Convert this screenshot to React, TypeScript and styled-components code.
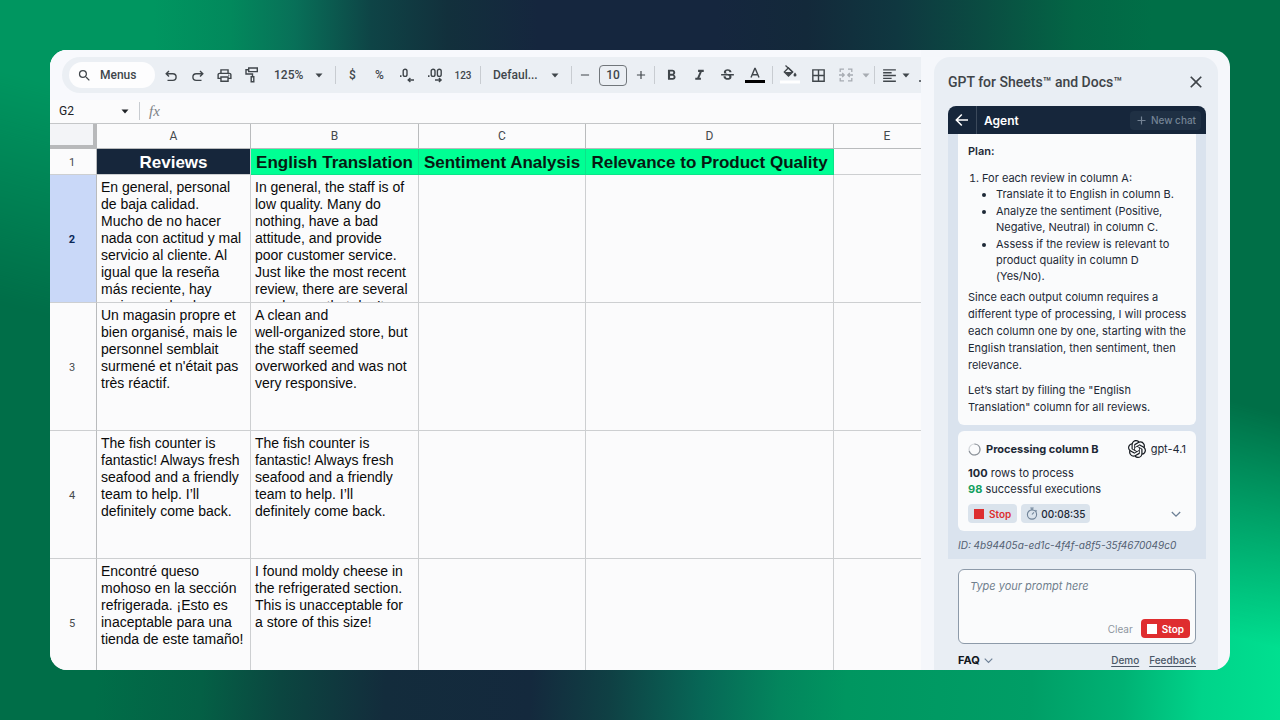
import React from "react";
import styled, { createGlobalStyle, css } from "styled-components";
import {
  MdSearch,
  MdOutlinePrint,
  MdStrikethroughS,
  MdFormatItalic,
  MdFormatBold,
  MdBorderAll,
  MdFormatAlignLeft,
  MdClose,
  MdAdd,
  MdRemove,
} from "react-icons/md";

const GlobalStyle = createGlobalStyle`
  *, *::before, *::after { box-sizing: border-box; }
  body { margin: 0; }
  button, select, input, textarea { font: inherit; color: inherit; margin: 0; }
`;

const ui = `Roboto, "Liberation Sans", sans-serif`;
const chat = `Inter, "Liberation Sans", sans-serif`;
const sheet = `"Liberation Sans", Arial, sans-serif`;

/* ---------- backdrop and window ---------- */

const Backdrop = styled.div`
  position: relative;
  display: flex;
  height: 100vh;
  padding: 50px;
  background: linear-gradient(
    93deg,
    #006e48 10%,
    #046045 18%,
    #0b4640 24%,
    #132c3c 32%,
    #14293d 43%,
    #0f4044 49%,
    #076756 56%,
    #03865d 62%,
    #009660 67%,
    #009e66 81%,
    #00b274 88%,
    #00d48a 94%,
    #00e090 100%
  );

  &::before {
    content: "";
    position: absolute;
    inset: 0;
    background: linear-gradient(
      90deg,
      #009660 12%,
      #02895c 18%,
      #087058 23%,
      #0e4446 29%,
      #12303c 35%,
      #15263e 42%,
      #15263e 56%,
      #13293a 63%,
      #0f3740 70%,
      #0a4d42 77%,
      #036645 84%,
      #006f47 90%
    );
    mask-image: linear-gradient(195deg, #000 39%, transparent 61%);
  }
`;

const Window = styled.div`
  position: relative;
  flex: 1;
  min-width: 0;
  display: flex;
  gap: 13px;
  padding-right: 12px;
  border-radius: 17px;
  overflow: hidden;
  background: #f5f7fb;
`;

const SheetPane = styled.main`
  flex: 1;
  min-width: 0;
  display: flex;
  flex-direction: column;
  overflow: hidden;
  background: #fbfbfc;
  font-family: ${ui};
`;

/* ---------- toolbar ---------- */

const ToolbarArea = styled.div`
  flex: none;
  padding: 7px 0 7px 12px;
  background: #f8f9fd;
  overflow: hidden;
`;

const Toolbar = styled.div`
  display: flex;
  align-items: center;
  width: max-content;
  height: 36px;
  padding: 0 7px;
  border-radius: 18px;
  background: #ebeff4;
  color: #40464b;
  font-size: 12px;
  font-weight: 500;
`;

const MenuSearch = styled.button`
  display: flex;
  align-items: center;
  gap: 8px;
  width: 86px;
  height: 26px;
  margin-right: 2px;
  padding: 0 8px;
  border: 0;
  border-radius: 13px;
  background: #fdfdfe;
  svg { width: 15px; height: 15px; }
`;

const Tool = styled.button<{ $w?: number; $dim?: boolean; $small?: boolean }>`
  display: flex;
  align-items: center;
  justify-content: center;
  flex: none;
  width: ${(p) => p.$w ?? 28}px;
  height: 28px;
  padding: 0;
  border: 0;
  background: none;
  font-size: ${(p) => (p.$small ? 10 : 12)}px;
  color: ${(p) => (p.$dim ? "#a7acb2" : "#40464b")};
  svg { flex: none; }
`;

const Rule = styled.span`
  flex: none;
  width: 1px;
  height: 18px;
  margin: 0 3px;
  background: #c8ccd1;
`;

const SelectBox = styled.label<{ $w: number }>`
  display: grid;
  grid-template-columns: 1fr 8px;
  align-items: center;
  flex: none;
  width: ${(p) => p.$w}px;
  padding: 0 9px;
  select {
    grid-area: 1 / 1 / 2 / 3;
    appearance: none;
    width: 100%;
    padding: 0;
    border: 0;
    background: none;
  }
  svg { grid-area: 1 / 2; pointer-events: none; }
`;

const SizeInput = styled.input`
  flex: none;
  width: 28px;
  height: 21px;
  margin: 0 4px;
  padding: 0;
  border: 1px solid #71767b;
  border-radius: 4px;
  background: none;
  text-align: center;
`;

/* ---------- formula bar ---------- */

const FormulaBar = styled.div`
  display: flex;
  align-items: center;
  flex: none;
  height: 23px;
  padding-bottom: 1px;
  color: #202327;
  font-size: 12px;
`;

const NameBox = styled.label`
  display: flex;
  align-items: center;
  width: 86px;
  padding: 0 7px 0 9px;
  input {
    flex: 1;
    min-width: 0;
    padding: 0;
    border: 0;
    background: none;
  }
  svg { flex: none; }
`;

const Fx = styled.span`
  padding-left: 6px;
  color: #7d8287;
  font: italic 15px "Liberation Serif", serif;
`;

/* ---------- grid ---------- */

const Grid = styled.table`
  flex: none;
  align-self: flex-start;
  table-layout: fixed;
  width: 891px;
  border-collapse: separate;
  border-spacing: 0;
  border-top: 1px solid #c4c6c8;
  font-family: ${sheet};
`;

const line = css`
  border: 0 solid #cdcfd1;
  border-width: 0 1px 1px 0;
  padding: 0;
`;

const ColumnHead = styled.th`
  ${line}
  height: 25px;
  border-color: #b9bbbd;
  font: 400 12px ${ui};
  color: #45494d;
`;

const Corner = styled.td`
  ${line}
  border-color: #b8b9bb;
  border-width: 0 4px 4px 0;
  background: #f3f4f7;
`;

const RowHead = styled.th<{ $active?: boolean }>`
  ${line}
  padding: 2px 2px 0 0;
  border-right-color: #b9bbbd;
  font: ${(p) => (p.$active ? 700 : 400)} 11px ${ui};
  color: ${(p) => (p.$active ? "#0b2858" : "#45494d")};
  background: ${(p) => (p.$active ? "#c9d8f8" : "none")};
`;

const TitleCell = styled.td<{ $tone?: "navy" | "green" }>`
  ${line}
  height: 26px;
  padding-top: 2px;
  text-align: center;
  white-space: nowrap;
  font-weight: 700;
  font-size: 17px;
  line-height: 20px;
  ${(p) => p.$tone === "navy" && "background: #16263b; color: #fff;"}
  ${(p) => p.$tone === "green" && "background: #00ff94; color: #071a12; border-color: #0ce389;"}
`;

const Cell = styled.td`
  ${line}
  vertical-align: top;
  color: #0a0a0a;
`;

const CellText = styled.div`
  height: 127px;
  padding: 4px 2px 0 4px;
  overflow: hidden;
  white-space: pre-line;
  font-size: 14px;
  line-height: 17px;
`;

/* ---------- side panel ---------- */

const Panel = styled.aside`
  display: flex;
  flex-direction: column;
  flex: none;
  width: 284px;
  margin-top: 7px;
  padding: 0 12px 0 14px;
  border-radius: 16px 16px 0 0;
  overflow: hidden;
  background: #e9eef4;
  font-family: ${chat};
  font-size: 11px;
  color: #1d2936;
`;

const PanelHead = styled.header`
  display: flex;
  align-items: center;
  justify-content: space-between;
  flex: none;
  height: 49px;
  font-family: ${ui};
  color: #3f4449;
  h1 { margin: 0; font-size: 14px; font-weight: 500; }
`;

const IconButton = styled.button`
  display: flex;
  align-items: center;
  justify-content: center;
  padding: 0;
  border: 0;
  background: none;
`;

const AgentBar = styled.div`
  display: flex;
  align-items: center;
  flex: none;
  height: 28px;
  padding-right: 5px;
  border-radius: 8px 8px 0 0;
  background: #16263b;
  color: #fff;
  h2 { flex: 1; margin: 0; padding-left: 7px; font-size: 12px; font-weight: 600; }
`;

const BackButton = styled(IconButton)`
  width: 29px;
  height: 28px;
  border-right: 1px solid #3b495b;
`;

const NewChat = styled.button`
  display: flex;
  align-items: center;
  gap: 5px;
  height: 19px;
  padding: 0 5px 0 7px;
  border: 0;
  border-radius: 4px;
  background: #1f3044;
  color: #748394;
  font-size: 10px;
  font-weight: 500;
`;

const Thread = styled.section`
  flex: none;
  padding: 0 10px 5px;
  background: #dae3ee;
`;

const Message = styled.article`
  padding: 9px 8px 9px 10px;
  border-radius: 0 0 6px 6px;
  background: #fafbfc;
  line-height: 17px;
  h3 { margin: 0; font-size: 11px; font-weight: 600; }
  p { margin: 8px 0 0; }
  ol { margin: 10px 0 5px; padding: 0 0 0 14px; line-height: 16px; }
  ul { margin: 0; padding: 0 0 0 14px; list-style: disc; }
  ul li { margin-top: 1px; }
  ul li:first-child { margin-top: 0; }
  ol + p { margin-top: 5px; }
`;

const Job = styled.article`
  margin-top: 6px;
  padding: 9px 10px 8px;
  border-radius: 6px;
  background: #fafbfc;
  line-height: 16px;
  p { margin: 0; }
`;

const JobHead = styled.div`
  display: flex;
  align-items: center;
  gap: 5px;
  height: 18px;
  margin-bottom: 7px;
  h3 { flex: 1; margin: 0; font-size: 11px; font-weight: 700; white-space: nowrap; }
`;

const Good = styled.strong`
  color: #13a05f;
`;

const JobFoot = styled.div`
  display: flex;
  align-items: center;
  gap: 4px;
  margin-top: 7px;
  padding-right: 5px;
`;

const chip = css`
  display: flex;
  align-items: center;
  gap: 5px;
  height: 19px;
  padding: 0 6px;
  border: 0;
  border-radius: 4px;
  font-size: 10px;
  font-weight: 600;
`;

const StopChip = styled.button`
  ${chip}
  background: #dae3ec;
  color: #dd2f30;
`;

const TimeChip = styled.span`
  ${chip}
  gap: 3px;
  padding: 0 5px;
  background: #dae3ec;
  font-weight: 500;
`;

const Expand = styled(IconButton)`
  margin-left: auto;
`;

const Square = styled.span`
  width: 10px;
  height: 10px;
  background: currentColor;
`;

const RunId = styled.p`
  margin: 6px 0 0;
  line-height: 17px;
  font-size: 10px;
  font-style: italic;
  white-space: nowrap;
  color: #526072;
`;

const PanelFoot = styled.footer`
  padding: 10px 10px 0;
`;

const Prompt = styled.div`
  display: flex;
  flex-direction: column;
  height: 75px;
  padding: 7px 5px 5px 11px;
  border: 1px solid #8d9aa9;
  border-radius: 6px;
  background: #fafbfc;
  textarea {
    flex: 1;
    min-height: 0;
    padding: 0;
    border: 0;
    outline: 0;
    resize: none;
    background: none;
    line-height: 18px;
    font-size: 11px;
  }
  textarea::placeholder { font-style: italic; color: #71808e; opacity: 1; }
`;

const PromptActions = styled.div`
  display: flex;
  align-items: center;
  justify-content: flex-end;
  gap: 8px;
`;

const Clear = styled(IconButton)`
  font-size: 10px;
  color: #8f979f;
`;

const StopButton = styled.button`
  ${chip}
  background: #df2d2f;
  color: #fff;
`;

const Links = styled.nav`
  display: flex;
  align-items: center;
  gap: 10px;
  height: 32px;
  a { color: #4a5767; font-size: 10px; font-weight: 500; text-underline-offset: 2px; }
`;

const Faq = styled(IconButton)`
  gap: 4px;
  margin-right: auto;
  font-weight: 700;
  color: #10161d;
`;

/* ---------- icons ---------- */

const Caret = () => (
  <svg width="8" height="5" viewBox="0 0 8 5" fill="currentColor" aria-hidden="true">
    <path d="M.5.5h7L4 4.5z" />
  </svg>
);

const Chevron = ({ size = 10, color = "#6d8096" }: { size?: number; color?: string }) => (
  <svg width={size} height={size} viewBox="0 0 10 10" fill="none" stroke={color} strokeWidth="1.3" aria-hidden="true">
    <path d="M.8 3 5 7.2 9.200 3" />
  </svg>
);

const Undo = ({ flip }: { flip?: boolean }) => (
  <svg width="12" height="14" viewBox="0 0 12 14" fill="none" stroke="currentColor" strokeWidth="1.4" aria-hidden="true">
    {flip ? (
      <path d="M8 3 10.800 5.800 8 8.600M10.500 5.800H4.200a3.300 3.300 0 0 0 0 6.600H9.500" />
    ) : (
      <path d="M4 3 1.200 5.800 4 8.600M1.500 5.800h6.300a3.300 3.300 0 0 1 0 6.600H2.500" />
    )}
  </svg>
);

const Roller = () => (
  <svg width="14" height="16" viewBox="0 0 14 16" fill="none" stroke="currentColor" strokeWidth="1.4" aria-hidden="true">
    <path d="M3.700 1h8.600v3.600H3.700zM3.700 2.800H1v4.200h6.500v2.800" />
    <path d="M6.200 9.800h2.600v4.900H6.200z" />
  </svg>
);

const Decimals = ({ more }: { more?: boolean }) => (
  <svg width="17" height="17" viewBox="0 0 17 17" fill="none" stroke="currentColor" strokeWidth="1.4" aria-hidden="true">
    <path d="M1 9.200h1.500" strokeWidth="1.800" />
    <rect x="4.200" y="2.200" width="3.800" height="7.200" rx="1.900" />
    {more ? (
      <>
        <rect x="10.400" y="2.200" width="3.800" height="7.200" rx="1.900" />
        <path d="M8 13h6M11.900 11l2.200 2-2.200 2" />
      </>
    ) : (
      <path d="M15 13H9.500M11.400 11l-2.200 2 2.200 2" />
    )}
  </svg>
);

const TextColor = () => (
  <svg width="20" height="18" viewBox="0 0 20 18" fill="none" stroke="currentColor" strokeWidth="1.4" aria-hidden="true">
    <path d="M6 11.500 9.800 2.500h.4L14 11.500M7.300 8.700h5.400" />
    <path d="M0 15.500h20" stroke="#000" strokeWidth="3" />
  </svg>
);

const FillColor = () => (
  <svg width="20" height="20" viewBox="0 0 20 20" aria-hidden="true">
    <path d="M5.500 .5 12.800 7.300" stroke="currentColor" strokeWidth="1.300" fill="none" />
    <path d="M8.500 2.800 4.300 7l4.200 4.100L12.700 7z" fill="none" stroke="currentColor" strokeWidth="1.300" />
    <path d="M4.500 7h8.200l-4.200 4.100z" fill="currentColor" />
    <path d="M15 7.500s-1.500 1.700-1.500 2.600a1.500 1.500 0 0 0 3 0c0-.9-1.500-2.600-1.500-2.600z" fill="currentColor" />
    <path d="M0 15.500h20v3H0z" fill="#fff" />
  </svg>
);

const Merge = () => (
  <svg width="14" height="14" viewBox="0 0 14 14" fill="none" stroke="currentColor" strokeWidth="1.300" aria-hidden="true">
    <path d="M5 1.200H1.200V4M9 1.200h3.800V4M5 12.800H1.200V10M9 12.800h3.800V10" />
    <path d="M0 7h5M3.200 5l2 2-2 2M14 7H9M10.800 5l-2 2 2 2" />
  </svg>
);

const VerticalAlign = () => (
  <svg width="12" height="14" viewBox="0 0 12 14" fill="none" stroke="currentColor" strokeWidth="1.400" aria-hidden="true">
    <path d="M0 13h12M6 1v8M3 6.500l3 3 3-3" />
  </svg>
);

const ArrowLeft = () => (
  <svg width="14" height="14" viewBox="0 0 14 14" fill="none" stroke="currentColor" strokeWidth="1.500" aria-hidden="true">
    <path d="M13 7H1.500M6.800 1.500 1.300 7l5.500 5.500" />
  </svg>
);

const Plus = () => (
  <svg width="9" height="9" viewBox="0 0 9 9" stroke="currentColor" strokeWidth="1.200" aria-hidden="true">
    <path d="M4.500 .5v8M.5 4.500h8" />
  </svg>
);

const Spinner = () => (
  <svg width="13" height="13" viewBox="0 0 13 13" fill="none" strokeWidth="1.200" aria-hidden="true">
    <circle cx="6.500" cy="6.500" r="5.500" stroke="#d3d6da" />
    <path d="M6.500 1a5.500 5.500 0 1 1-5.300 7" stroke="#8c9299" />
  </svg>
);

const Stopwatch = () => (
  <svg width="12" height="13" viewBox="0 0 12 13" fill="none" stroke="#6f8398" strokeWidth="1.100" aria-hidden="true">
    <circle cx="6" cy="7.500" r="4.600" />
    <path d="M4.300 1h3.400M6 1v1.900M6 7.500l1.900-2.200M9.500 3.200l1.200 1.200" />
  </svg>
);

const OpenAiMark = () => (
  <svg width="18" height="18" viewBox="0 0 24 24" fill="#14191f" aria-hidden="true">
    <path d="M22.2819 9.8211a5.9847 5.9847 0 0 0-.5157-4.9108 6.0462 6.0462 0 0 0-6.5098-2.9A6.0651 6.0651 0 0 0 4.9807 4.1818a5.9847 5.9847 0 0 0-3.9977 2.9 6.0462 6.0462 0 0 0 .7427 7.0966 5.98 5.98 0 0 0 .511 4.9107 6.051 6.051 0 0 0 6.5146 2.9001A5.9847 5.9847 0 0 0 13.2599 24a6.0557 6.0557 0 0 0 5.7718-4.2058 5.9894 5.9894 0 0 0 3.9977-2.9001 6.0557 6.0557 0 0 0-.7475-7.0729zm-9.022 12.6081a4.4755 4.4755 0 0 1-2.8764-1.0408l.1419-.0804 4.7783-2.7582a.7948.7948 0 0 0 .3927-.6813v-6.7369l2.02 1.1686a.071.071 0 0 1 .038.052v5.5826a4.504 4.504 0 0 1-4.4945 4.4944zm-9.6607-4.1254a4.4708 4.4708 0 0 1-.5346-3.0137l.142.0852 4.783 2.7582a.7712.7712 0 0 0 .7806 0l5.8428-3.3685v2.3324a.0804.0804 0 0 1-.0332.0615L9.74 19.9502a4.4992 4.4992 0 0 1-6.1408-1.6464zM2.3408 7.8956a4.485 4.485 0 0 1 2.3655-1.9728V11.6a.7664.7664 0 0 0 .3879.6765l5.8144 3.3543-2.0201 1.1685a.0757.0757 0 0 1-.071 0l-4.8303-2.7865A4.504 4.504 0 0 1 2.3408 7.872zm16.5963 3.8558L13.1038 8.364 15.1192 7.2a.0757.0757 0 0 1 .071 0l4.8303 2.7913a4.4944 4.4944 0 0 1-.6765 8.1042v-5.6772a.79.79 0 0 0-.407-.667zm2.0107-3.0231l-.142-.0852-4.7735-2.7818a.7759.7759 0 0 0-.7854 0L9.409 9.2297V6.8974a.0662.0662 0 0 1 .0284-.0615l4.8303-2.7866a4.4992 4.4992 0 0 1 6.6802 4.66zM8.3065 12.863l-2.02-1.1638a.0804.0804 0 0 1-.038-.0567V6.0742a4.4992 4.4992 0 0 1 7.3757-3.4537l-.142.0805L8.704 5.459a.7948.7948 0 0 0-.3927.6813zm1.0976-2.3654l2.602-1.4998 2.6069 1.4998v2.9994l-2.5974 1.4997-2.6067-1.4997Z" />
  </svg>
);

/* ---------- data ---------- */

const columns = [
  { name: "A", width: 154 },
  { name: "B", width: 168 },
  { name: "C", width: 167 },
  { name: "D", width: 248 },
  { name: "E", width: 107 },
];

const reviews = [
  {
    original:
      "En general, personal\nde baja calidad.\nMucho de no hacer\nnada con actitud y mal servicio al cliente. Al\nigual que la reseña\nmás reciente, hay\nvarios empleados",
    english:
      "In general, the staff is of low quality. Many do nothing, have a bad attitude, and provide\npoor customer service.\nJust like the most recent review, there are several\nemployees that don’t",
  },
  {
    original: "Un magasin propre et bien organisé, mais le personnel semblait surmené et n'était pas très réactif.",
    english: "A clean and\nwell-organized store, but the staff seemed overworked and was not very responsive.",
  },
  {
    original: "The fish counter is fantastic! Always fresh seafood and a friendly team to help. I’ll definitely come back.",
    english: "The fish counter is fantastic! Always fresh seafood and a friendly team to help. I’ll\ndefinitely come back.",
  },
  {
    original: "Encontré queso mohoso en la sección refrigerada. ¡Esto es inaceptable para una tienda de este tamaño!",
    english: "I found moldy cheese in the refrigerated section. This is unacceptable for\na store of this size!",
  },
];

/* ---------- page ---------- */

const SheetToolbar = () => (
  <ToolbarArea>
    <Toolbar>
      <MenuSearch><MdSearch />Menus</MenuSearch>
      <Tool $w={27} aria-label="Undo"><Undo /></Tool>
      <Tool $w={27} aria-label="Redo"><Undo flip /></Tool>
      <Tool $w={27} aria-label="Print"><MdOutlinePrint size={17} /></Tool>
      <Tool $w={27} aria-label="Paint format"><Roller /></Tool>
      <SelectBox $w={67}>
        <select aria-label="Zoom"><option>125%</option></select>
        <Caret />
      </SelectBox>
      <Rule />
      <Tool $w={27}>$</Tool>
      <Tool $w={27}>%</Tool>
      <Tool aria-label="Decrease decimal places"><Decimals /></Tool>
      <Tool aria-label="Increase decimal places"><Decimals more /></Tool>
      <Tool $small>123</Tool>
      <Rule />
      <SelectBox $w={84}>
        <select aria-label="Font"><option>Defaul...</option></select>
        <Caret />
      </SelectBox>
      <Rule />
      <Tool $w={20} aria-label="Decrease font size"><MdRemove size={14} /></Tool>
      <SizeInput aria-label="Font size" defaultValue="10" />
      <Tool $w={20} aria-label="Increase font size"><MdAdd size={14} /></Tool>
      <Rule />
      <Tool $w={27} aria-label="Bold"><MdFormatBold size={17} /></Tool>
      <Tool aria-label="Italic"><MdFormatItalic size={17} /></Tool>
      <Tool aria-label="Strikethrough"><MdStrikethroughS size={17} /></Tool>
      <Tool aria-label="Text color"><TextColor /></Tool>
      <Rule />
      <Tool aria-label="Fill color"><FillColor /></Tool>
      <Tool aria-label="Borders"><MdBorderAll size={17} /></Tool>
      <Tool $dim aria-label="Merge cells"><Merge /></Tool>
      <Tool $w={11} $dim aria-label="Merge options"><Caret /></Tool>
      <Rule />
      <Tool $w={22} aria-label="Align"><MdFormatAlignLeft size={17} /></Tool>
      <Tool $w={11} aria-label="Align options"><Caret /></Tool>
      <Tool aria-label="Vertical align"><VerticalAlign /></Tool>
    </Toolbar>
  </ToolbarArea>
);

const SheetGrid = () => (
  <Grid>
    <colgroup>
      <col width={47} />
      {columns.map((c) => <col key={c.name} width={c.width} />)}
    </colgroup>
    <thead>
      <tr>
        <Corner />
        {columns.map((c) => <ColumnHead key={c.name} scope="col">{c.name}</ColumnHead>)}
      </tr>
    </thead>
    <tbody>
      <tr>
        <RowHead scope="row">1</RowHead>
        <TitleCell $tone="navy">Reviews</TitleCell>
        <TitleCell $tone="green">English Translation</TitleCell>
        <TitleCell $tone="green">Sentiment Analysis</TitleCell>
        <TitleCell $tone="green">Relevance to Product Quality</TitleCell>
        <TitleCell />
      </tr>
      {reviews.map((r, i) => (
        <tr key={i}>
          <RowHead scope="row" $active={i === 0}>{i + 2}</RowHead>
          <Cell><CellText>{r.original}</CellText></Cell>
          <Cell><CellText>{r.english}</CellText></Cell>
          <Cell />
          <Cell />
          <Cell />
        </tr>
      ))}
    </tbody>
  </Grid>
);

const AgentPanel = () => (
  <Panel>
    <PanelHead>
      <h1>GPT for Sheets™ and Docs™</h1>
      <IconButton aria-label="Close"><MdClose size={20} /></IconButton>
    </PanelHead>
    <AgentBar>
      <BackButton aria-label="Back"><ArrowLeft /></BackButton>
      <h2>Agent</h2>
      <NewChat><Plus />New chat</NewChat>
    </AgentBar>
    <Thread>
      <Message>
        <h3>Plan:</h3>
        <ol>
          <li>
            For each review in column A:
            <ul>
              <li>Translate it to English in column B.</li>
              <li>Analyze the sentiment (Positive, Negative, Neutral) in column C.</li>
              <li>Assess if the review is relevant to product quality in column D (Yes/No).</li>
            </ul>
          </li>
        </ol>
        <p>
          Since each output column requires a different type of processing, I will process each column one by one,
          starting with the English translation, then sentiment, then relevance.
        </p>
        <p>Let’s start by filling the "English Translation" column for all reviews.</p>
      </Message>
      <Job>
        <JobHead>
          <Spinner />
          <h3>Processing column B</h3>
          <OpenAiMark />
          <span>gpt-4.1</span>
        </JobHead>
        <p><strong>100</strong> rows to process</p>
        <p><Good>98</Good> successful executions</p>
        <JobFoot>
          <StopChip><Square />Stop</StopChip>
          <TimeChip><Stopwatch />00:08:35</TimeChip>
          <Expand aria-label="Show details"><Chevron /></Expand>
        </JobFoot>
      </Job>
      <RunId>ID: 4b94405a-ed1c-4f4f-a8f5-35f4670049c0</RunId>
    </Thread>
    <PanelFoot>
      <Prompt>
        <textarea aria-label="Prompt" placeholder="Type your prompt here" />
        <PromptActions>
          <Clear>Clear</Clear>
          <StopButton><Square />Stop</StopButton>
        </PromptActions>
      </Prompt>
      <Links>
        <Faq>FAQ <Chevron size={9} /></Faq>
        <a href="#demo">Demo</a>
        <a href="#feedback">Feedback</a>
      </Links>
    </PanelFoot>
  </Panel>
);

export default function App() {
  return (
    <>
      <GlobalStyle />
      <Backdrop>
        <Window>
          <SheetPane>
            <SheetToolbar />
            <FormulaBar>
              <NameBox>
                <input aria-label="Cell" defaultValue="G2" />
                <Caret />
              </NameBox>
              <Rule />
              <Fx>fx</Fx>
            </FormulaBar>
            <SheetGrid />
          </SheetPane>
          <AgentPanel />
        </Window>
      </Backdrop>
    </>
  );
}
